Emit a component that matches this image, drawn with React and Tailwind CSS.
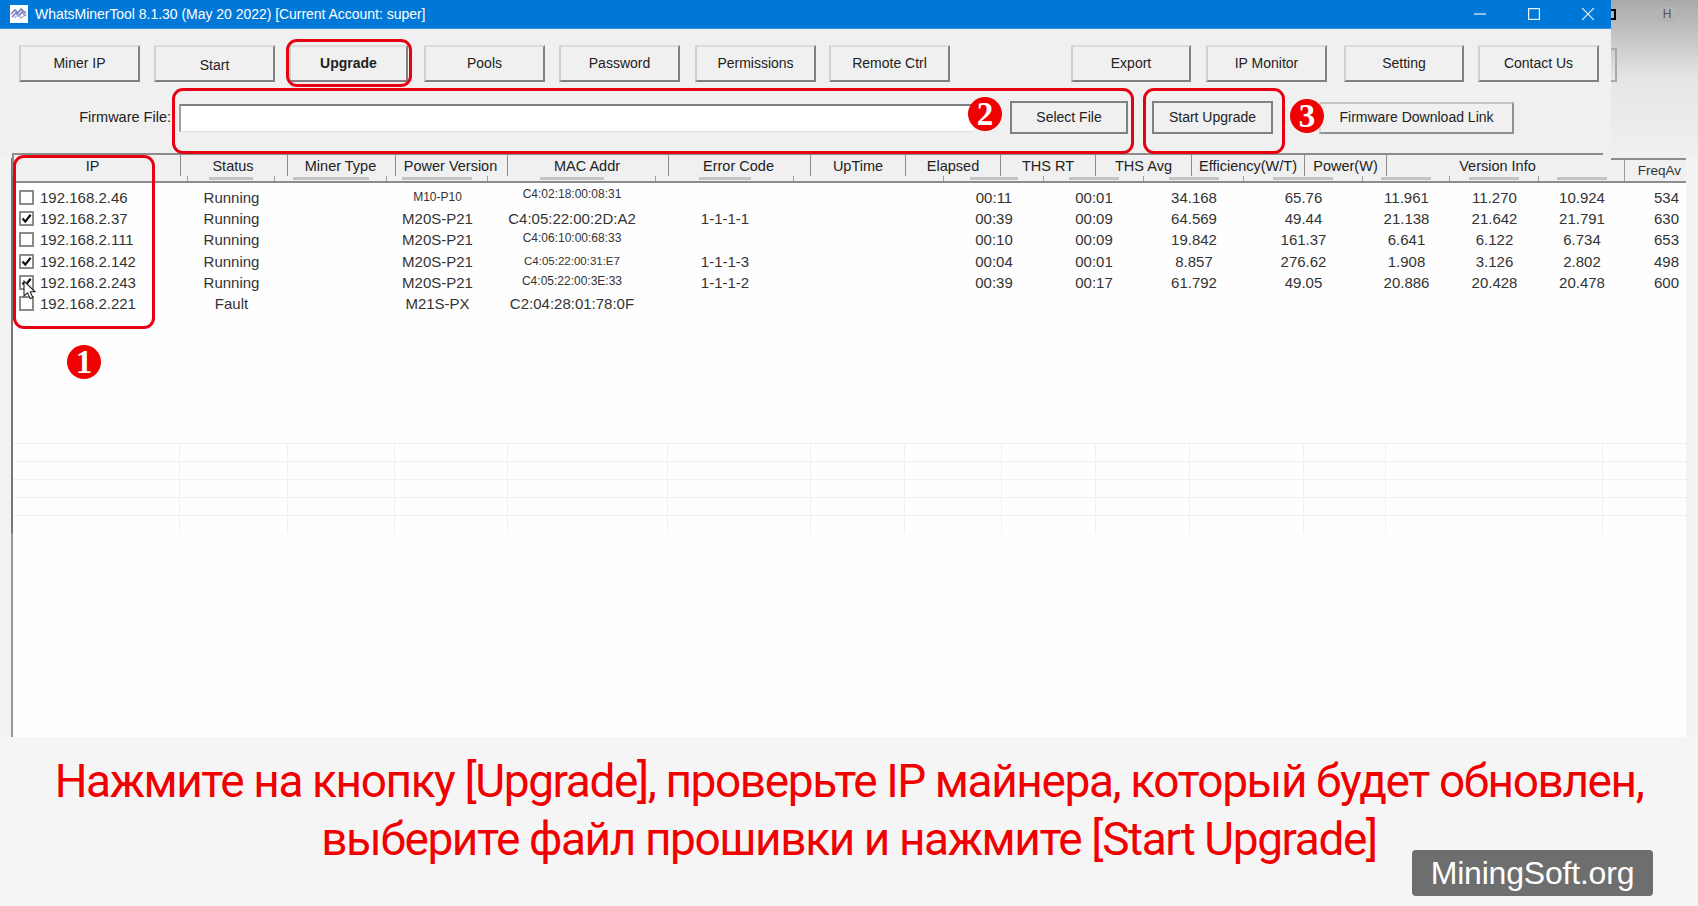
import React from 'react';

const sans = "font-['Liberation_Sans',Arial,sans-serif]";

const rows = [
  { ip: '192.168.2.46', checked: false, status: 'Running', type: 'M10-P10', small: true, mac: 'C4:02:18:00:08:31', macClass: 'text-[12px] -translate-y-[3px]', pos: '', up: '00:11', el: '00:01', avg: '34.168', power: '65.76', a: '11.961', b: '11.270', c: '10.924', f: '534' },
  { ip: '192.168.2.37', checked: true, status: 'Running', type: 'M20S-P21', mac: 'C4:05:22:00:2D:A2', macClass: 'text-[15px]', pos: '1-1-1-1', up: '00:39', el: '00:09', avg: '64.569', power: '49.44', a: '21.138', b: '21.642', c: '21.791', f: '630' },
  { ip: '192.168.2.111', checked: false, status: 'Running', type: 'M20S-P21', mac: 'C4:06:10:00:68:33', macClass: 'text-[12px] -translate-y-[1px]', pos: '', up: '00:10', el: '00:09', avg: '19.842', power: '161.37', a: '6.641', b: '6.122', c: '6.734', f: '653' },
  { ip: '192.168.2.142', checked: true, status: 'Running', type: 'M20S-P21', mac: 'C4:05:22:00:31:E7', macClass: 'text-[11.5px]', pos: '1-1-1-3', up: '00:04', el: '00:01', avg: '8.857', power: '276.62', a: '1.908', b: '3.126', c: '2.802', f: '498' },
  { ip: '192.168.2.243', checked: true, status: 'Running', type: 'M20S-P21', mac: 'C4:05:22:00:3E:33', macClass: 'text-[12px] -translate-y-[1px]', pos: '1-1-1-2', up: '00:39', el: '00:17', avg: '61.792', power: '49.05', a: '20.886', b: '20.428', c: '20.478', f: '600' },
  { ip: '192.168.2.221', checked: false, status: 'Fault', type: 'M21S-PX', mac: 'C2:04:28:01:78:0F', macClass: 'text-[15px]', pos: '', up: '', el: '', avg: '', power: '', a: '', b: '', c: '', f: '' },
];

const frontHeaders = [
  ['IP', 'w-[167px] pr-[9px]'], ['Status', 'w-[107px] pr-[2px]'], ['Miner Type', 'w-[108px] pr-[2px]'], ['Power Version', 'w-[112px] pr-[2px]'],
  ['MAC Addr', 'w-[161px] pr-[2px]'], ['Error Code', 'w-[142px] pr-[2px]'], ['UpTime', 'w-[95px]'], ['Elapsed', 'w-[95px]'],
  ['THS RT', 'w-[95px]'], ['THS Avg', 'w-[96px]'], ['Efficiency(W/T)', 'w-[113px]'], ['Power(W)', 'w-[82px]'],
  ['Version Info', 'w-[218px] pl-[3px]'],
];

// columns of the list behind: only the feet of their labels show under the front header
const ghostFeet = ['w-[0px]', 'w-[44px]', 'w-[76px]', 'w-[70px]', 'w-[64px]', 'w-[52px]', 'w-[0px]', 'w-[48px]', 'w-[50px]', 'w-[50px]', 'w-[60px]', 'w-[50px]', 'w-[50px]', 'w-[50px]'];

const columns = 'grid-cols-[175px_87px_112px_101px_168px_138px_150px_100px_100px_100px_119px_87px_89px_86px_59px]';
const gridLines = ['w-[167px]', 'w-[108px]', 'w-[107px]', 'w-[113px]', 'w-[160px]', 'w-[143px]', 'w-[94px]', 'w-[97px]', 'w-[94px]', 'w-[94px]', 'w-[114px]', 'w-[82px]', 'w-[217px]'];

const ToolButton = ({ label, className = '', bold = false, lower = false }) => (
  <button className={`h-[37px] w-[121px] shrink-0 bg-[#f0f0f0] border-2 border-t-[#dcdcdc] border-l-[#d0d0d0] border-r-[#808080] border-b-[#808080] text-[14px] text-[#222] ${bold ? 'font-bold border-b-[#666]' : ''} ${lower ? 'pt-[3px]' : ''} ${className}`}>
    {label}
  </button>
);

const FlatButton = ({ label, className = '' }) => (
  <button className={`h-[33px] shrink-0 bg-[#f0f0f0] border-2 border-[#808080] text-[14px] text-[#222] ${className}`}>
    {label}
  </button>
);

const Badge = ({ n, className = '' }) => (
  <div className={`absolute w-[34px] h-[34px] rounded-full bg-[#f00000] text-white flex items-center justify-center font-['Liberation_Serif',serif] font-bold text-[33px] leading-none ${className}`}>
    {n}
  </div>
);

const RedBox = ({ className = '' }) => (
  <div className={`absolute border-[3px] border-[#e60012] rounded-[11px] ${className}`} />
);

const Check = ({ checked }) => (
  <span className="w-[15px] h-[15px] shrink-0 border-2 border-[#8a8a8a] bg-white flex items-center justify-center">
    {checked && (
      <svg width="11" height="11" viewBox="0 0 11 11">
        <path d="M1.5 5.5 L4.3 8.6 L9.6 1.8" fill="none" stroke="#111" strokeWidth="2.2" />
      </svg>
    )}
  </span>
);

const App = () => {
  return (
    <div className={`relative w-[1698px] h-[906px] overflow-hidden flex flex-col bg-[#f5f5f5] ${sans}`}>
      {/* top: tool window + strip of the window behind it */}
      <div className="flex h-[158px] shrink-0">
        <div className="w-[1611px] shrink-0 bg-[#f0f0f0] flex flex-col">
          <div className="h-[29px] shrink-0 bg-[#0078d7] flex items-center pl-[10px] pr-[17px] border-b border-[#3a93dd]">
            <svg width="18" height="18" viewBox="0 0 18 18" className="shrink-0">
              <rect width="18" height="18" fill="#fff" />
              <path d="M1 9 L5 5 L8 8 L11 4 L16 8 M2 12 L6 8 L9 11 L12 7 L16 11" fill="none" stroke="#7b7fc4" strokeWidth="1.6" />
              <path d="M4 13 L8 10 L11 13 L15 10" fill="none" stroke="#a6a8dc" strokeWidth="1.2" />
            </svg>
            <span className="ml-[7px] text-[14px] tracking-[-0.03px] text-white whitespace-nowrap">WhatsMinerTool 8.1.30 (May 20 2022) [Current Account: super]</span>
            <div className="ml-auto flex items-center gap-[42px]">
              <svg width="12" height="12" viewBox="0 0 12 12"><path d="M0 6 H12" stroke="#e8f3fc" strokeWidth="1.2" /></svg>
              <svg width="12" height="12" viewBox="0 0 12 12"><rect x="0.6" y="0.6" width="10.8" height="10.8" fill="none" stroke="#e8f3fc" strokeWidth="1.2" /></svg>
              <svg width="12" height="12" viewBox="0 0 12 12"><path d="M0 0 L12 12 M12 0 L0 12" stroke="#e8f3fc" strokeWidth="1.2" /></svg>
            </div>
          </div>

          <div className="flex pl-[19px] pt-[16px]">
            <ToolButton label="Miner IP" />
            <ToolButton label="Start" className="ml-[14px]" lower />
            <ToolButton label="Upgrade" className="ml-[14px] !w-[119px]" bold />
            <ToolButton label="Pools" className="ml-[16px]" />
            <ToolButton label="Password" className="ml-[14px]" />
            <ToolButton label="Permissions" className="ml-[15px]" />
            <ToolButton label="Remote Ctrl" className="ml-[13px]" />
            <ToolButton label="Export" className="ml-[121px] !w-[120px]" />
            <ToolButton label="IP Monitor" className="ml-[15px]" />
            <ToolButton label="Setting" className="ml-[17px] !w-[120px]" />
            <ToolButton label="Contact Us" className="ml-[14px]" />
          </div>

          <div className="flex items-center mt-[19px] h-[33px]">
            <span className="w-[171px] text-right text-[14.5px] text-[#222] shrink-0">Firmware File:</span>
            <div className="ml-[8px] w-[794px] h-[28px] shrink-0 bg-white border-t-2 border-l-2 border-t-[#808080] border-l-[#a0a0a0] border-b border-b-[#dedede]" />
            <FlatButton label="Select File" className="ml-[37px] w-[118px]" />
            <FlatButton label="Start Upgrade" className="ml-[24px] w-[121px]" />
            <button className="ml-[46px] w-[195px] h-[32px] shrink-0 bg-[#f0f0f0] border-2 border-t-[#c4c4c4] border-l-[#d0d0d0] border-r-[#909090] border-b-[#909090] text-[14px] text-[#222]">
              Firmware Download Link
            </button>
          </div>
        </div>

        {/* window behind */}
        <div className="flex-1 bg-gradient-to-b from-[#a9a9a9] via-[#e6e6e6] to-[#f0f0f0]">
          <div className="flex items-center h-[29px] border-b border-[#b9b9b9]">
            <div className="w-[5px] h-[11px] border-y-2 border-r-2 border-black" />
            <div className="ml-[40px] w-[22px] h-[15px] rounded-[5px] bg-[#b4b4b4] text-[12px] leading-[15px] text-center text-[#555]">H</div>
          </div>
          <div className="w-[6px] h-[34px] mt-[19px] border-y-2 border-r-2 border-[#aaaaaa]" />
        </div>
      </div>

      {/* table */}
      <div className="relative h-[579px] shrink-0 flex flex-col bg-[#f3f3f3]">
        <div className="ml-[11px] w-[1675px] h-[375px] flex flex-col border-l-2 border-[#777] bg-[#fefefe]">
          <div className={`grid ${columns} h-[25px] shrink-0 bg-[#f0f0f0] border-t-2 border-b-2 border-[#8c8c8c] text-[#333]`}>
            {ghostFeet.map((w, i) => (
              <div key={i} className="border-r border-[#999] flex items-end justify-center pb-[1px]">
                <div className={`${w} h-[3px] bg-[#c4c4c4]`} />
              </div>
            ))}
            <div className="flex items-center justify-end pr-[3px] text-[13.5px] leading-[21px]">FreqAv</div>
          </div>

          <div className="pt-[4px] text-[15px] leading-[21px] text-[#333]">
            {rows.map((r) => (
              <div key={r.ip} className={`grid ${columns} h-[21.2px] items-center text-center whitespace-nowrap`}>
                <div className="flex items-center pl-[6px] gap-[6px] text-left"><Check checked={r.checked} />{r.ip}</div>
                <div>{r.status}</div>
                <div />
                <div className={r.small ? 'text-[12px]' : ''}>{r.type}</div>
                <div className={r.macClass}>{r.mac}</div>
                <div>{r.pos}</div>
                <div />
                <div>{r.up}</div>
                <div>{r.el}</div>
                <div>{r.avg}</div>
                <div>{r.power}</div>
                <div>{r.a}</div>
                <div>{r.b}</div>
                <div>{r.c}</div>
                <div className="text-right pr-[5px]">{r.f}</div>
              </div>
            ))}
          </div>

          {/* faint list grid */}
          <div className="mt-auto">
            {[0, 1, 2, 3, 4].map((n) => (
              <div key={n} className="flex h-[18px] border-t border-[#f0f0f0]">
                {gridLines.map((w, i) => (
                  <div key={i} className={`${w} shrink-0 border-r border-[#f1f1f1]`} />
                ))}
              </div>
            ))}
          </div>
        </div>
        <div className="ml-[11px] w-[1675px] flex-1 border-l-2 border-[#999] bg-[#fefefe]" />

        {/* front header of the tool window, lies over the list behind */}
        <div className="absolute left-[12px] top-[-5px] flex w-[1599px] h-[23px] bg-[#f0f0f0] text-[14.5px] leading-[21px] text-[#222]">
          <div className="flex w-[1591px] border-t-2 border-l-2 border-[#8c8c8c]">
            {frontHeaders.map(([label, w], i) => (
              <div key={label} className={`${w} shrink-0 flex items-center justify-center pt-[1px] whitespace-nowrap ${i < 12 ? 'border-r border-[#8c8c8c]' : ''}`}>{label}</div>
            ))}
          </div>
        </div>
      </div>

      {/* caption */}
      <div className="flex-1 bg-[#f5f5f5] pt-[15px] text-center font-['Roboto',sans-serif] text-[46px] leading-[58px] text-[#f00000] tracking-[-1.4px] whitespace-nowrap">
        <div>Нажмите на кнопку [Upgrade], проверьте IP майнера, который будет обновлен,</div>
        <div>выберите файл прошивки и нажмите [Start Upgrade]</div>
      </div>

      {/* annotations */}
      <RedBox className="left-[286px] top-[39px] w-[126px] h-[48px]" />
      <RedBox className="left-[172px] top-[88px] w-[962px] h-[66px]" />
      <RedBox className="left-[1143px] top-[88px] w-[142px] h-[66px]" />
      <RedBox className="left-[13px] top-[155px] w-[142px] h-[174px]" />
      <Badge n="1" className="left-[67px] top-[345px]" />
      <Badge n="2" className="left-[968px] top-[97px]" />
      <Badge n="3" className="left-[1290px] top-[99px]" />

      <svg width="14" height="20" viewBox="0 0 14 20" className="absolute left-[23px] top-[280px]">
        <path d="M1 1 V16 L4.6 12.8 L7.2 18.6 L9.8 17.4 L7.2 11.8 H12 Z" fill="#fff" stroke="#222" strokeWidth="1.1" />
      </svg>

      <div className="absolute left-[1412px] top-[850px] w-[241px] h-[46px] rounded-[4px] bg-[#6e6e6e] flex items-center justify-center text-white text-[32px] tracking-[-0.2px]">
        MiningSoft.org
      </div>
    </div>
  );
};

export default App;
